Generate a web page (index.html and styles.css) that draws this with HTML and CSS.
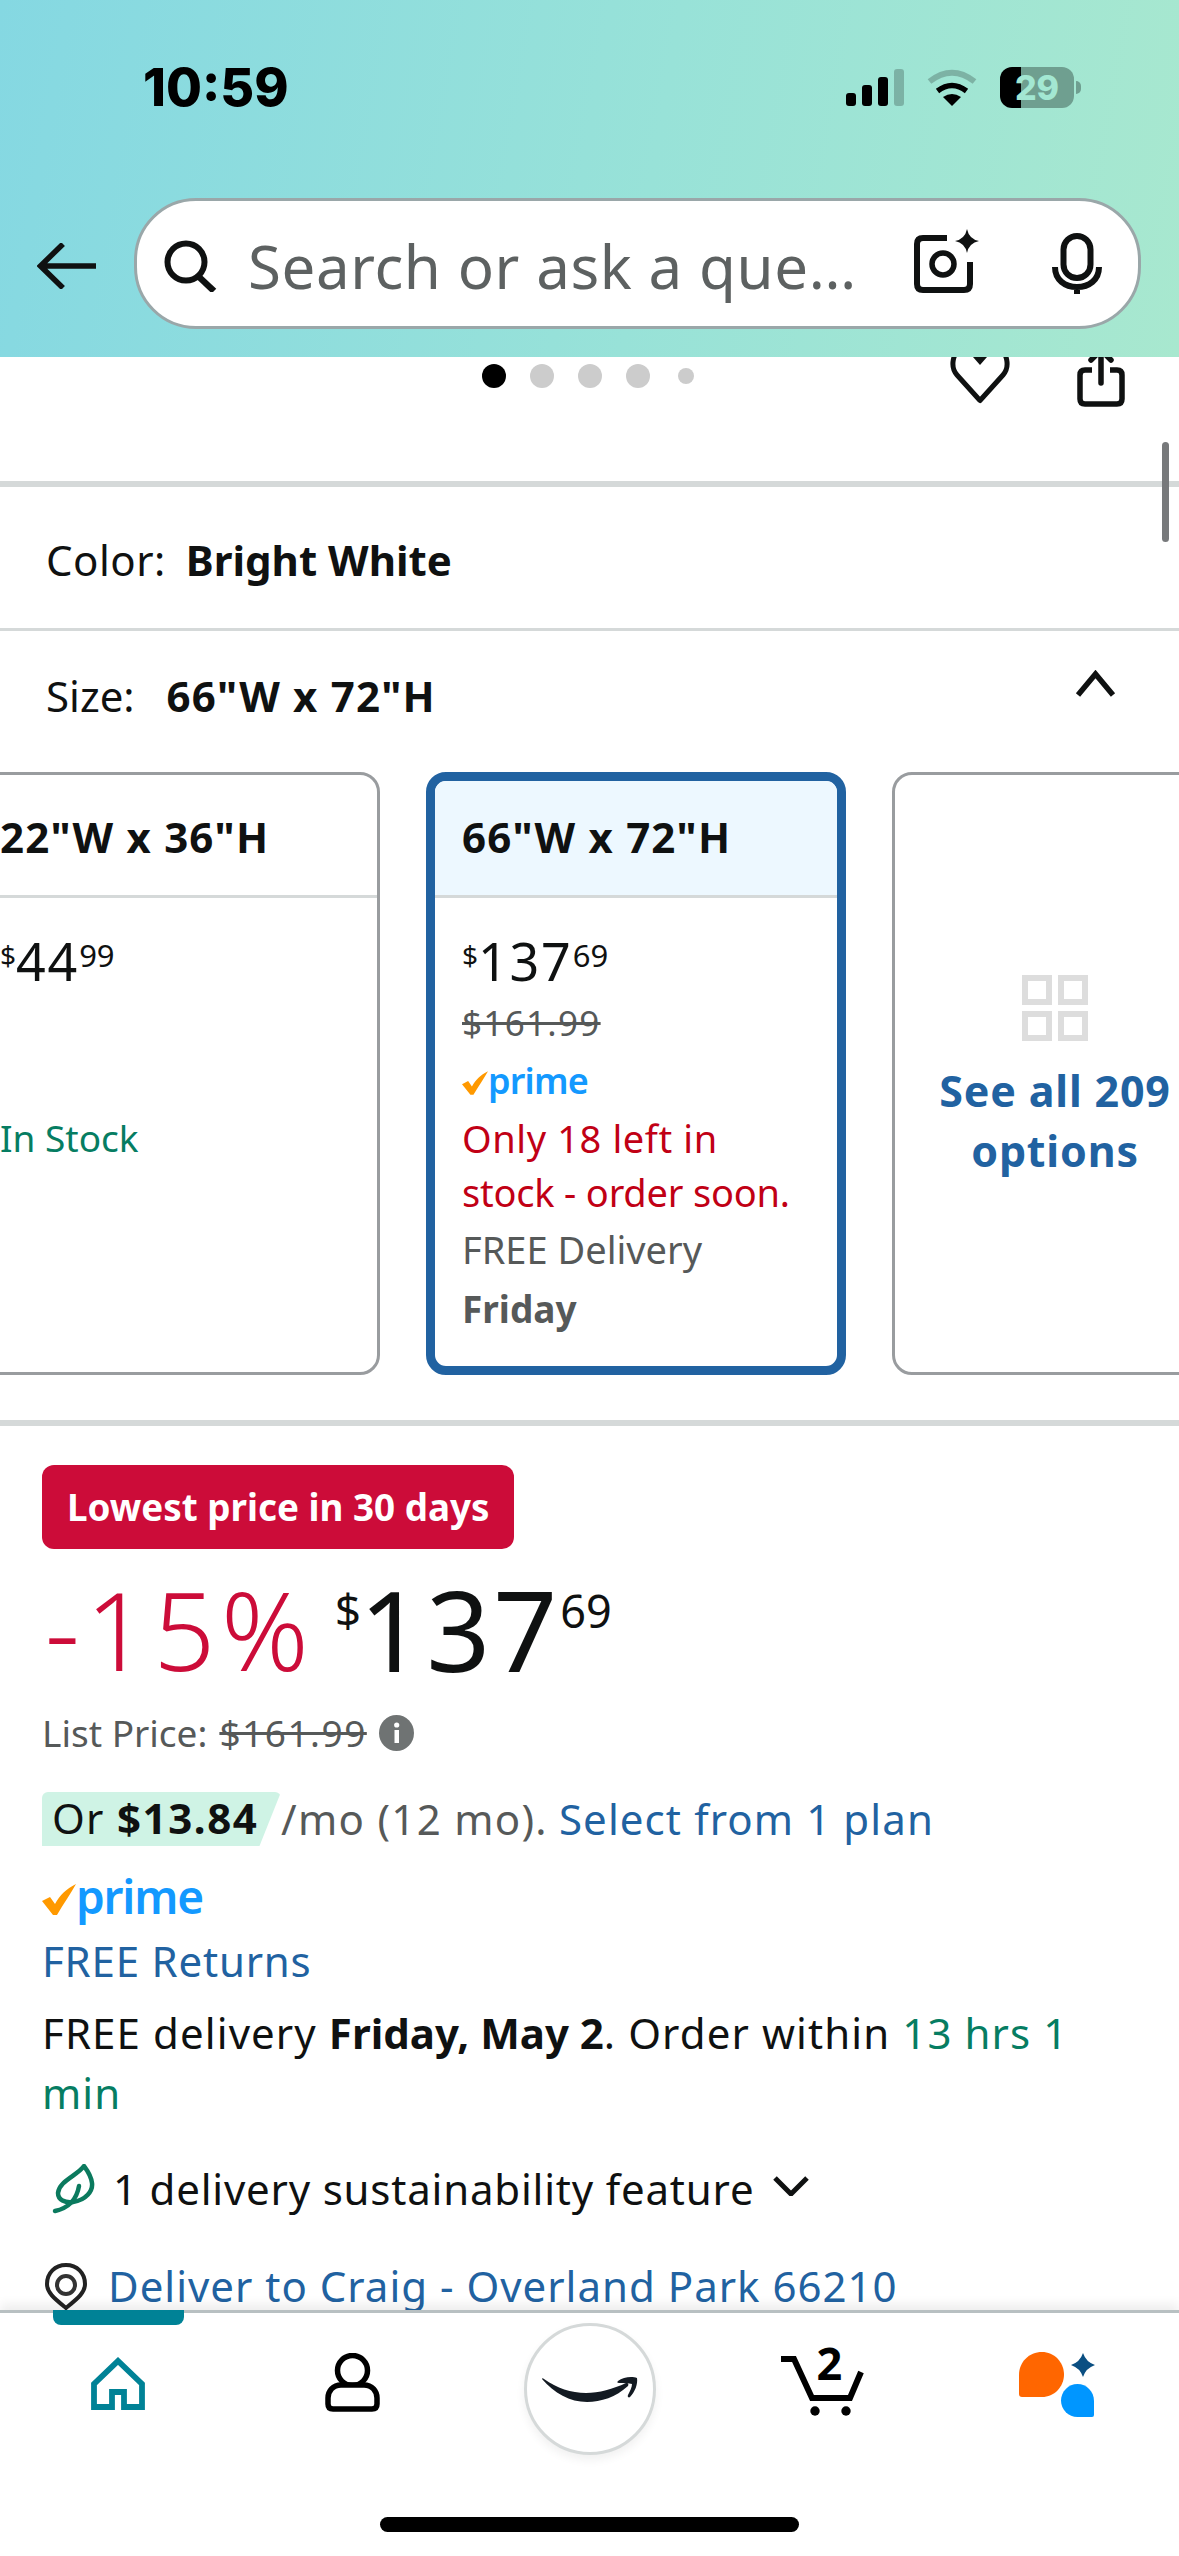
FILE: index.html
```html
<!DOCTYPE html>
<html lang="en">
<head>
<meta charset="utf-8">
<title>Product</title>
<link rel="stylesheet" href="styles.css">
</head>
<body>
<div class="phone">
  <header class="top">
    <div class="status">
      <span class="time">10:59</span>
      <div class="status-icons">
        <svg class="i-signal" viewBox="0 0 58 37"><rect x="0" y="24" width="10" height="13" rx="3"/><rect x="16" y="16" width="10" height="21" rx="3"/><rect x="32" y="8" width="10" height="29" rx="3"/><rect x="48" y="0" width="10" height="37" rx="3" opacity=".22"/></svg>
        <svg class="i-wifi" viewBox="0 0 50 37"><path d="M2.5 12.5Q25 -5 47.500 12.500" fill="none" stroke="#000" stroke-width="6" opacity=".22"/><path d="M10.500 22Q25 11 39.500 22" fill="none" stroke="#000" stroke-width="5.500"/><path d="M25 37L16 28Q25 22 34 28Z"/></svg>
        <div class="battery"><span>29</span></div>
      </div>
    </div>
    <div class="searchrow">
      <svg class="i-back" viewBox="0 0 59 46"><path d="M59 23H4M26 1L3.500 23L26 45" fill="none" stroke="#0f1111" stroke-width="5.500"/></svg>
      <div class="search">
        <svg class="i-search" viewBox="0 0 54 52"><circle cx="22" cy="22" r="18.500" fill="none" stroke="#0f1111" stroke-width="6"/><path d="M34 36L50 51" stroke="#0f1111" stroke-width="6.500" fill="none"/></svg>
        <span class="search-text">Search or ask a que…</span>
        <svg class="i-camera" viewBox="0 0 66 65"><path d="M33 9H9Q3 9 3 15V55Q3 61 9 61H50Q56 61 56 55V33" fill="none" stroke="#0f1111" stroke-width="6"/><circle cx="29" cy="35" r="11" fill="none" stroke="#0f1111" stroke-width="5.500"/><path d="M53 0Q55 10 65 12Q55 14 53 24Q51 14 41 12Q51 10 53 0Z" fill="#0f1111"/></svg>
        <svg class="i-mic" viewBox="0 0 50 61"><rect x="11.500" y="3" width="27" height="42" rx="13.500" fill="none" stroke="#0f1111" stroke-width="6"/><path d="M3 34C3 47 13 54 25 54C37 54 47 47 47 34M25 54V61" fill="none" stroke="#0f1111" stroke-width="6"/></svg>
      </div>
    </div>
  </header>

  <main class="content">
    <div class="gallery">
      <div class="dots"><i class="dot on"></i><i class="dot"></i><i class="dot"></i><i class="dot"></i><i class="dot small"></i></div>
      <svg class="i-heart" viewBox="0 0 60 48"><path d="M30 43.500L7 18C0 10 2 -6 14 -10C22 -12 28 -6 30 2C32 -6 38 -12 46 -10C58 -6 60 10 53 18Z" fill="none" stroke="#0f1111" stroke-width="5" stroke-linejoin="round"/><path d="M23 0H37L30 8Z" fill="#0f1111"/></svg>
      <svg class="i-share" viewBox="0 0 48 50"><path d="M15 13H8Q3 13 3 18V42Q3 47 8 47H40Q45 47 45 42V18Q45 13 40 13H33" fill="none" stroke="#0f1111" stroke-width="5.500"/><path d="M24 -4V26M14 3L24 -7L34 3" fill="none" stroke="#0f1111" stroke-width="5.500" stroke-linecap="round"/></svg>
    </div>
    <hr class="rule thick">
    <div class="option color-row"><span>Color:</span><b>Bright White</b></div>
    <hr class="rule">
    <div class="option size-row"><span>Size:</span><b>66"W x 72"H</b>
      <svg class="i-chev-up" viewBox="0 0 41 27"><path d="M3 25L20.500 4L38 25" fill="none" stroke="#0f1111" stroke-width="5.500"/></svg>
    </div>
    <div class="cards">
      <article class="card card-first">
        <div class="card-head">22"W x 36"H</div>
        <div class="card-body">
          <div class="price"><span class="p-sym">$</span><span class="p-main">44</span><span class="p-frac">99</span></div>
          <p class="in-stock">In Stock</p>
        </div>
      </article>
      <article class="card card-selected">
        <div class="card-head">66"W x 72"H</div>
        <div class="card-body">
          <div class="price"><span class="p-sym">$</span><span class="p-main">137</span><span class="p-frac">69</span></div>
          <p class="card-list"><s>$161.99</s></p>
          <div class="prime prime-small"><svg viewBox="0 0 34 31"><path d="M0 17L8 13L13 20C18 11 24 5 34 0C29 9 22 19 15 31H11Z"/></svg><span>prime</span></div>
          <p class="low-stock"><span class="low-first">Only 18 left in</span><br>stock - order soon.</p>
          <p class="card-free">FREE Delivery</p>
          <p class="card-day">Friday</p>
        </div>
      </article>
      <article class="card card-more">
        <div class="grid-icon"><i></i><i></i><i></i><i></i></div>
        <p class="see-all">See all 209<br>options</p>
      </article>
    </div>
    <hr class="rule thick">
    <section class="buy">
      <div class="badge">Lowest price in 30 days</div>
      <div class="bigprice"><span class="off">-15%</span><span class="b-sym">$</span><span class="b-main">137</span><span class="b-frac">69</span></div>
      <div class="listprice"><span>List Price:</span><s>$161.99</s>
        <svg class="i-info" viewBox="0 0 35 36"><ellipse cx="17.500" cy="18" rx="17.500" ry="18" fill="#6f7373"/><rect x="15.500" y="15" width="4.500" height="13" fill="#fff"/><circle cx="17.700" cy="10" r="2.600" fill="#fff"/></svg>
      </div>
      <div class="plan"><span class="pill">Or <b>$13.84</b></span><span class="plan-gray">/mo (12 mo).</span><span class="link plan-link">Select from 1 plan</span></div>
      <div class="prime prime-large"><svg viewBox="0 0 34 31"><path d="M0 17L8 13L13 20C18 11 24 5 34 0C29 9 22 19 15 31H11Z"/></svg><span>prime</span></div>
      <p class="link returns">FREE Returns</p>
      <p class="delivery">FREE delivery <b>Friday, May 2</b>. Order within <span class="green">13 hrs 1</span> <span class="green">min</span></p>
      <div class="sustain">
        <svg class="i-leaf" viewBox="0 0 44 50"><path d="M33 2C27 11 8 17 7 29C7 36 14 39 22 38C35 36 42 27 41 19C40 11 36 6 33 2Z" fill="none" stroke="#0b7a5e" stroke-width="4.500" stroke-linejoin="round"/><path d="M4 47C13 45 25 40 28 22" fill="none" stroke="#0b7a5e" stroke-width="4.500" stroke-linecap="round"/></svg>
        <span>1 delivery sustainability feature</span>
        <svg class="i-chev-down" viewBox="0 0 36 20"><path d="M2 2L18 18L34 2" fill="none" stroke="#0f1111" stroke-width="5"/></svg>
      </div>
      <div class="deliver">
        <svg class="i-pin" viewBox="0 0 42 48"><path d="M21 2C10 2 2 10 2 21C2 30 10 36 21 45C32 36 40 30 40 21C40 10 32 2 21 2Z" fill="#fff" stroke="#222" stroke-width="4"/><circle cx="21" cy="22" r="9" fill="#fff" stroke="#333" stroke-width="4"/></svg>
        <span class="link">Deliver to Craig - Overland Park 66210</span>
      </div>
    </section>
  </main>

  <nav class="tabbar">
    <div class="tabs">
      <div class="tab tab-home">
        <svg class="i-home" viewBox="0 0 55 53"><path d="M4 50V27L28 4L52 27V50H34V35H22V50Z" fill="none" stroke="#008296" stroke-width="5.800"/></svg>
      </div>
      <div class="tab tab-user">
        <svg class="i-user" viewBox="0 0 55 60"><circle cx="27.500" cy="17.500" r="15" fill="none" stroke="#000" stroke-width="5.500"/><path d="M16 32H39C47 32 52 38 52 45V51Q52 56 47 56H8Q3 56 3 51V45C3 38 8 32 16 32Z" fill="#fff" stroke="#000" stroke-width="5.500"/></svg>
      </div>
      <div class="tab tab-logo">
        <div class="logo-circle"><svg viewBox="0 0 98 28"><path d="M1 3C1 2 2 2 3 3C16 12 30 17 45 17C58 17 72 13 85 7C87 6 88 9 87 10C75 21 60 26 46 26C29 26 13 17 1 3Z" fill="#131a22"/><path d="M77 5C82 1 91 0 96 2C97 8 94 16 89 21C88 22 86 21 87 19C89 15 91 11 91 8C88 7 83 7 78 7C76 7 76 6 77 5Z" fill="#131a22"/></svg></div>
      </div>
      <div class="tab tab-cart">
        <div class="cart">
          <svg class="i-cart" viewBox="0 0 85 60"><path d="M1 3H14L32 42H70L81 16" fill="none" stroke="#000" stroke-width="6"/><circle cx="35" cy="55" r="4.700" fill="#000"/><circle cx="66" cy="55" r="4.700" fill="#000"/></svg>
          <span class="cart-count">2</span>
        </div>
      </div>
      <div class="tab tab-rufus">
        <svg class="i-rufus" viewBox="0 0 76 66"><path d="M23 0C35 0 45 10 45 22.500C45 35 35 45 23 45H3Q0 45 0 42V23C0 10 10 0 23 0Z" fill="#ff6600"/><path d="M58.500 32C67.500 32 75 39.500 75 49V63Q75 65 73 65H58.500C49.500 65 42 57.500 42 48.500C42 39.500 49.500 32 58.500 32Z" fill="#0096ff"/><path d="M64 1Q67 10 76 13Q67 16 64 25Q61 16 52 13Q61 10 64 1Z" fill="#0b4f82"/></svg>
      </div>
    </div>
    <div class="homebar"></div>
  </nav>
  <div class="scrollthumb"></div>
</div>
</body>
</html>
```
FILE: styles.css
```css
* { box-sizing: border-box; }
html, body { margin: 0; padding: 0; background: #fff; }
body { font-family: "Noto Sans", "Open Sans", sans-serif; color: #0f1111; }
p { margin: 0; }
s { text-decoration: line-through; }

.phone {
  position: relative;
  width: 1179px;
  height: 2556px;
  overflow: hidden;
  display: flex;
  flex-direction: column;
  background: #fff;
}

/* header */
.top {
  flex: none;
  height: 357px;
  background: linear-gradient(100deg, #85d8e2 0%, #98e2d8 55%, #a8e8cf 100%);
  position: relative;
  z-index: 2;
}
.status {
  height: 198px;
  padding: 62px 105px 0 143px;
  display: flex;
  align-items: flex-start;
  justify-content: space-between;
}
.time {
  font-family: Inter, "Liberation Sans", sans-serif;
  font-weight: 800;
  font-size: 52px;
  line-height: 1;
  color: #000;
}
.status-icons { display: flex; align-items: center; gap: 23px; margin-top: 5px; }
.i-signal { width: 58px; height: 37px; display: block; }
.i-wifi { width: 50px; height: 37px; display: block; }
.battery {
  position: relative;
  width: 74px;
  height: 41px;
  border-radius: 12px;
  background: linear-gradient(90deg, #000 29%, #6f9f90 29%);
  display: flex;
  align-items: center;
  justify-content: center;
  font-family: Inter, sans-serif;
  font-weight: 800;
  font-size: 34px;
  line-height: 1;
  color: #a3e7d2;
}
.battery::after {
  content: "";
  position: absolute;
  right: -7px;
  top: 14px;
  width: 5px;
  height: 13px;
  border-radius: 0 5px 5px 0;
  background: #6f9f90;
}
.searchrow { display: flex; align-items: center; padding-left: 37px; height: 131px; }
.i-back { width: 59px; height: 46px; flex: none; margin-right: 38px; margin-top: 5px; }
.search {
  width: 1007px;
  height: 131px;
  background: #fff;
  border: 3px solid #9aa7a9;
  border-radius: 62px;
  display: flex;
  align-items: center;
  padding-left: 27px;
}
.i-search { width: 54px; height: 52px; flex: none; margin-top: 5px; }
.search-text {
  margin-left: 30px;
  width: 666px;
  flex: none;
  white-space: nowrap;
  font-size: 60px;
  letter-spacing: .6px;
  line-height: 70px;
  color: #5d6161;
  margin-top: 5px;
}
.i-camera { width: 66px; height: 65px; flex: none; margin-top: -5px; }
.i-mic { width: 50px; height: 61px; flex: none; margin-left: 72px; }

/* product gallery strip */
.content { flex: none; height: 1953px; overflow: hidden; }
.gallery {
  height: 124px;
  position: relative;
  display: flex;
  align-items: flex-start;
  overflow: hidden;
}
.dots { display: flex; align-items: center; gap: 24px; margin: 7px 0 0 482px; height: 24px; }
.dot { width: 24px; height: 24px; border-radius: 50%; background: #ccc; display: block; }
.dot.on { background: #000; }
.dot.small { width: 16px; height: 16px; margin-left: 4px; }
.i-heart { width: 60px; height: 48px; flex: none; margin-left: 256px; }
.i-share { width: 48px; height: 50px; flex: none; margin-left: 67px; }

.rule { border: 0; margin: 0; height: 3px; background: #d5d9d9; }
.rule.thick { height: 6px; }

.option {
  display: flex;
  align-items: center;
  font-size: 42px;
  line-height: 54px;
  padding-left: 46px;
}
.option b { font-weight: 700; }
.color-row { height: 141px; padding-top: 4px; gap: 20px; }
.color-row span { letter-spacing: .5px; }
.size-row { height: 141px; padding-bottom: 12px; gap: 32px; position: relative; }
.size-row b { letter-spacing: 1.2px; }
.i-chev-up { width: 41px; height: 27px; position: absolute; left: 1075px; top: 39px; }

/* cards */
.cards {
  display: flex;
  gap: 46px;
  margin-left: -36px;
  margin-bottom: 45px;
  height: 603px;
}
.card {
  --b: 3px;
  flex: none;
  height: 603px;
  width: 420px;
  border: var(--b) solid #999c9f;
  border-radius: 20px;
  overflow: hidden;
  background: #fff;
}
.card-first { width: 416px; }
.card-selected { --b: 9px; border-color: #2162a1; }
.card-head {
  height: calc(126px - var(--b));
  border-bottom: 3px solid #d5d9d9;
  padding-left: calc(36px - var(--b));
  padding-top: calc(9px - var(--b));
  font-size: 42px;
  letter-spacing: 1.2px;
  font-weight: 700;
  line-height: 54px;
  display: flex;
  align-items: center;
  padding-bottom: 3px;
}
.card-selected .card-head { background: #edf8ff; }
.card-body { padding: 37px 0 0 calc(36px - var(--b)); }
.price { display: flex; align-items: flex-start; }
.p-main { font-size: 52px; letter-spacing: 1.8px; line-height: 1; }
.p-sym { font-size: 28px; line-height: 1; margin-top: 6px; }
.p-frac { font-size: 31px; line-height: 1; margin-top: 5px; }
.in-stock { margin-top: 124px; font-size: 37px; line-height: 54px; color: #067d62; }
.card-list { margin-top: 11px; font-size: 35px; letter-spacing: 1.3px; line-height: 50px; color: #565959; }
.prime { display: flex; align-items: flex-start; color: #1399ff; font-weight: 600; }
.prime svg { display: block; fill: #ff9900; flex: none; }
.prime span { display: block; line-height: 1; }
.prime-small { margin-top: 18px; height: 36px; }
.prime-small svg { width: 26px; height: 24px; margin-top: 5px; margin-right: 0; }
.prime-small span { font-size: 36px; margin-top: -3px; letter-spacing: -.8px; }
.low-stock { margin-top: 9px; font-size: 38px; line-height: 54px; color: #c10015; white-space: nowrap; letter-spacing: -.2px; }
.low-first { letter-spacing: .6px; }
.card-free { margin-top: 3px; font-size: 38px; line-height: 54px; color: #565959; }
.card-day { margin-top: 6px; font-size: 37px; line-height: 54px; font-weight: 700; color: #565959; }

.card-more {
  width: 326px;
  display: flex;
  flex-direction: column;
  align-items: center;
  padding-top: 200px;
}
.grid-icon {
  width: 66px;
  height: 66px;
  display: grid;
  grid-template-columns: 30px 30px;
  grid-template-rows: 30px 30px;
  gap: 6px;
}
.grid-icon i { display: block; border: 6px solid #ddd; }
.see-all {
  margin-top: 20px;
  text-align: center;
  font-size: 43px;
  letter-spacing: .8px;
  line-height: 60px;
  font-weight: 700;
  color: #2162a1;
  white-space: nowrap;
}

/* buy box */
.buy { padding: 39px 0 0 42px; }
.badge {
  width: fit-content;
  height: 84px;
  padding: 0 25px;
  border-radius: 12px;
  background: #cc0c39;
  color: #fff;
  font-size: 36.800px;
  font-weight: 700;
  line-height: 84px;
}
.bigprice { display: flex; align-items: flex-start; margin-top: 24px; height: 112px; }
.off { font-size: 108px; letter-spacing: 6px; line-height: 1; margin-top: 3px; font-weight: 300; color: #cc0c39; margin-left: 3px; }
.b-sym { font-size: 46px; line-height: 1; margin-top: 13px; margin-left: 20px; }
.b-main { font-size: 112px; letter-spacing: 3px; line-height: 1; margin-left: -2px; }
.b-frac { font-size: 45px; line-height: 1; margin-top: 15px; margin-left: 0; }
.listprice {
  display: flex;
  align-items: center;
  margin-top: 23px;
  font-size: 37px;
  line-height: 50px;
  color: #565959;
  gap: 12px;
}
.listprice s { letter-spacing: 1.500px; }
.i-info { width: 35px; height: 36px; flex: none; margin-left: 0; }
.plan { display: flex; align-items: center; margin-top: 34px; height: 54px; font-size: 42px; line-height: 52px; white-space: pre; letter-spacing: 1.300px; }
.pill {
  height: 54px;
  width: 239px;
  padding-left: 10px;
  background: #cff3e5;
  clip-path: polygon(0 0, 100% 0, 91% 100%, 0 100%);
  border-radius: 6px 6px 0 0;
  flex: none;
}
.pill b { font-weight: 700; letter-spacing: 1.600px; }
.plan-gray { color: #565959; }
.plan-link { margin-left: 11px; letter-spacing: 1.100px; }
.link { color: #2162a1; }
.prime-large { margin-top: 32px; height: 44px; }
.prime-large svg { width: 34px; height: 31px; margin-top: 6px; }
.prime-large span { font-size: 46px; margin-top: -5px; letter-spacing: -1.200px; }
.returns { margin-top: 12px; font-size: 42px; letter-spacing: .8px; line-height: 54px; }
.delivery { margin-top: 15px; font-size: 42px; letter-spacing: 1.100px; line-height: 60px; width: 1040px; }
.delivery b { letter-spacing: 0; }
.green { color: #067d62; }
.sustain { display: flex; align-items: center; margin-top: 39px; height: 54px; font-size: 42px; letter-spacing: .8px; line-height: 54px; }
.i-leaf { width: 44px; height: 50px; flex: none; margin-left: 9px; margin-right: 18px; }
.i-chev-down { width: 36px; height: 20px; flex: none; margin-left: 19px; margin-top: -7px; }
.deliver { display: flex; align-items: flex-start; margin-top: 43px; font-size: 42px; letter-spacing: 1px; line-height: 54px; }
.i-pin { width: 42px; height: 48px; flex: none; margin: 4px 21px 0 3px; }

/* tab bar */
.tabbar {
  flex: 1;
  position: relative;
  border-top: 3px solid #b8c0c2;
  background: #fff;
  box-shadow: 0 -6px 10px rgba(0, 0, 0, .07);
  z-index: 1;
}
.tabs {
  height: 204px;
  display: grid;
  grid-template-columns: 234px 236px 240px 224px 1fr;
}
.tab { display: flex; justify-content: center; align-items: flex-start; position: relative; }
.tab-home::before {
  content: "";
  position: absolute;
  left: 53px;
  top: -3px;
  width: 131px;
  height: 15px;
  background: #008296;
  border-radius: 0 0 8px 8px;
}
.i-home { width: 55px; height: 53px; margin-top: 44px; }
.i-user { width: 55px; height: 60px; margin-top: 40px; }
.logo-circle {
  width: 132px;
  height: 132px;
  margin-top: 10px;
  border: 3px solid #d5d9d9;
  border-radius: 50%;
  background: #fff;
  box-shadow: 0 5px 10px rgba(0, 0, 0, .06);
  display: flex;
  align-items: center;
  justify-content: center;
}
.logo-circle svg { width: 98px; height: 28px; margin-top: 2px; }
.cart { position: relative; width: 85px; height: 60px; margin-top: 43px; }
.i-cart { width: 85px; height: 60px; display: block; }
.cart-count {
  position: absolute;
  left: 37px;
  top: -16px;
  font-size: 45px;
  line-height: 1;
  font-weight: 700;
  color: #000;
}
.i-rufus { width: 76px; height: 66px; margin-top: 39px; }
.homebar { width: 419px; height: 15px; margin: 0 auto; border-radius: 8px; background: #000; }
.scrollthumb {
  position: absolute;
  left: 1162px;
  top: 442px;
  width: 7px;
  height: 100px;
  border-radius: 4px;
  background: #77797b;
  z-index: 3;
}
```
